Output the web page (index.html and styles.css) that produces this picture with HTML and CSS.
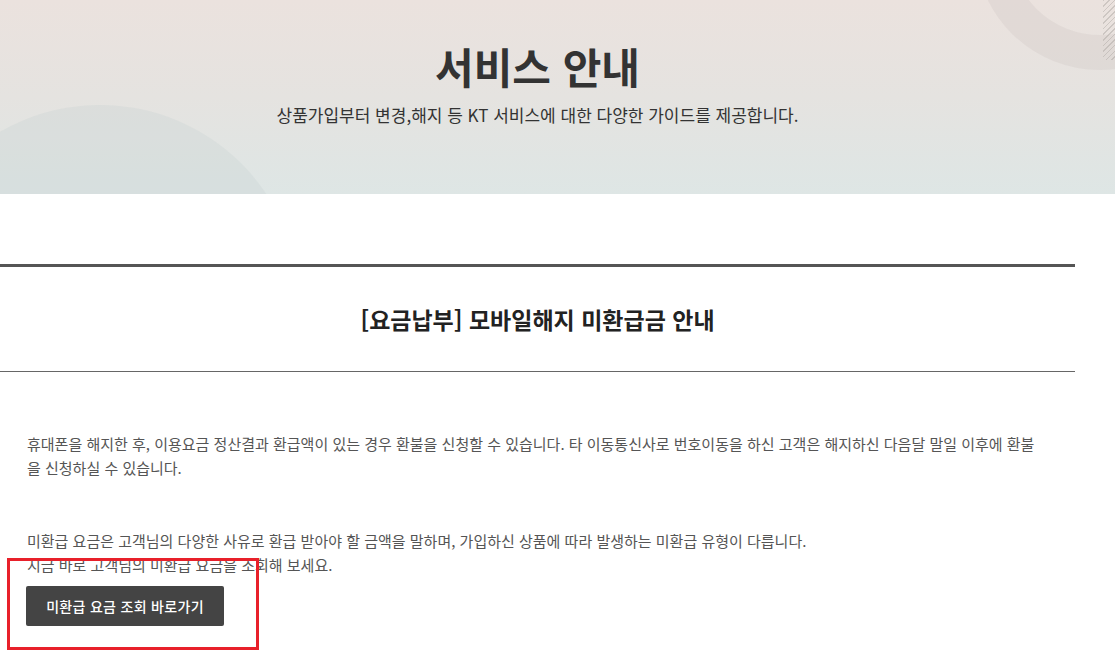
FILE: index.html
```html
<!DOCTYPE html>
<html lang="ko">
<head>
<meta charset="utf-8">
<title>서비스 안내</title>
<link rel="stylesheet" href="styles.css">
</head>
<body>
<header class="hero">
  <span class="deco deco-circle"></span>
  <span class="deco deco-ring"></span>
  <span class="deco deco-hatch"></span>
  <div class="hero-inner">
    <h1 class="hero-title">서비스 안내</h1>
    <p class="hero-sub">상품가입부터 변경,해지 등 KT 서비스에 대한 다양한 가이드를 제공합니다.</p>
  </div>
</header>
<main class="content">
  <div class="article-head">
    <h2 class="article-title">[요금납부] 모바일해지 미환급금 안내</h2>
  </div>
  <div class="article-body">
    <p class="para">휴대폰을 해지한 후, 이용요금 정산결과 환급액이 있는 경우 환불을 신청할 수 있습니다. 타 이동통신사로 번호이동을 하신 고객은 해지하신 다음달 말일 이후에 환불을 신청하실 수 있습니다.</p>
    <p class="para para-2">미환급 요금은 고객님의 다양한 사유로 환급 받아야 할 금액을 말하며, 가입하신 상품에 따라 발생하는 미환급 유형이 다릅니다.<br>지금 바로 고객님의 미환급 요금을 조회해 보세요.</p>
    <div class="btn-wrap">
      <a class="btn" href="#">미환급 요금 조회 바로가기</a>
      <span class="highlight"></span>
    </div>
  </div>
</main>
</body>
</html>
```
FILE: styles.css
```css
html, body {
  margin: 0;
  padding: 0;
  background: #fff;
  font-family: "Noto Sans CJK KR", "Noto Sans", sans-serif;
  color: #333;
}

html {
  overflow: hidden;
}

.hero {
  position: relative;
  height: 194px;
  overflow: hidden;
  background: linear-gradient(180deg, #ebe2de 0%, #e5e3e0 50%, #dee6e5 100%);
}

.deco {
  position: absolute;
  display: block;
  border-radius: 50%;
}

.deco-circle {
  left: -100px;
  top: 105px;
  width: 400px;
  height: 400px;
  background: rgba(200, 210, 208, 0.3);
}

.deco-ring {
  left: 975px;
  top: -180px;
  width: 250px;
  height: 250px;
  box-sizing: border-box;
  border: 35px solid rgba(190, 180, 176, 0.18);
}

.deco-hatch {
  left: 1103px;
  top: 0;
  width: 14px;
  height: 60px;
  border-radius: 0;
  background: repeating-linear-gradient(135deg, rgba(170,165,160,0.45) 0 1px, transparent 1px 4px);
}

.hero-inner {
  position: relative;
  width: 1075px;
  display: flex;
  flex-direction: column;
  align-items: center;
}

.hero-title {
  margin: 37px 0 0;
  font-size: 42px;
  font-weight: 700;
  line-height: 58px;
  color: #333;
}

.hero-sub {
  margin: 7px 0 0;
  font-size: 17px;
  line-height: 25px;
  color: #333;
}

.content {
  width: 1075px;
  padding-top: 70px;
  padding-bottom: 60px;
}

.article-head {
  border-top: 3px solid #555;
  border-bottom: 1px solid #666;
  height: 104px;
  display: flex;
  align-items: center;
  justify-content: center;
}

.article-title {
  margin: 0;
  font-size: 23px;
  font-weight: 700;
  color: #222;
}

.article-body {
  padding: 60px 27px 0;
}

.para {
  margin: 0;
  font-size: 15px;
  line-height: 24px;
  color: #555;
}

.para-2 {
  margin-top: 49px;
}

.btn-wrap {
  position: relative;
  margin-top: 9px;
  margin-left: -1px;
}

.btn {
  display: inline-flex;
  align-items: center;
  justify-content: center;
  width: 198px;
  height: 40px;
  background: #444;
  color: #fff;
  font-size: 14px;
  font-weight: 500;
  letter-spacing: 0.3px;
  text-decoration: none;
  border-radius: 2px;
}

.highlight {
  position: absolute;
  left: -19px;
  top: -28px;
  width: 246px;
  height: 86px;
  border: 3px solid #e8202a;
}
```
